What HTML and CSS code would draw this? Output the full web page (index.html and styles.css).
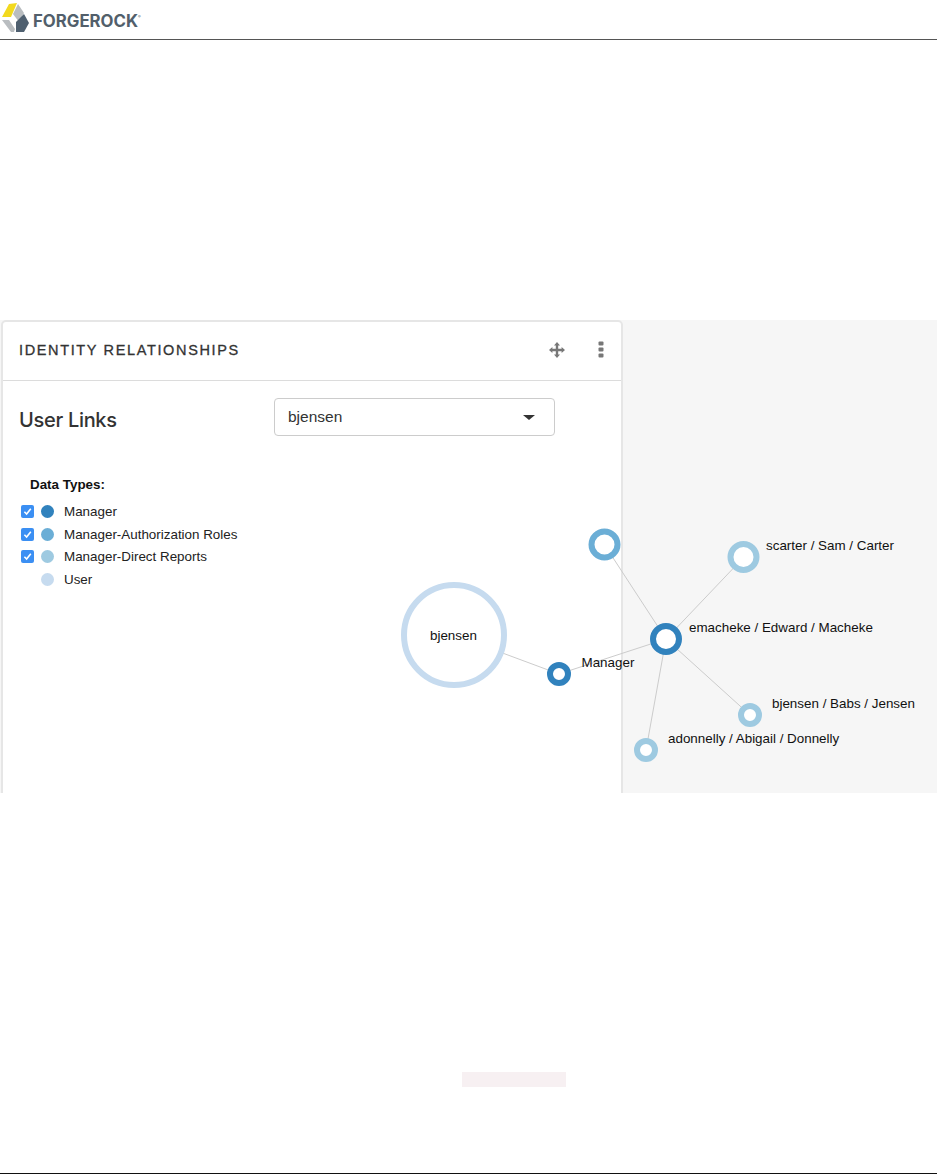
FILE: index.html
```html
<!DOCTYPE html>
<html lang="en">
<head>
<meta charset="utf-8">
<title>ForgeRock Identity Relationships</title>
<link rel="stylesheet" href="styles.css">
</head>
<body>
<div class="page">
  <header class="topbar">
    <svg class="logo-mark" width="30" height="34" viewBox="0 0 30 34" aria-hidden="true">
      <polygon points="2,17 9,4 17,3 11,17" fill="#f2d91f"/>
      <polygon points="18,4 24,13 19,22 13,14" fill="#b9bdc0"/>
      <polygon points="2,20 9,20 15,29 14,32 11,32" fill="#b9bdc0"/>
      <polygon points="24,14 29,23 24,32 16,32 16,22" fill="#4f6070"/>
    </svg>
    <span class="logo-text">FORGEROCK<sup class="logo-reg">®</sup></span>
  </header>

  <figure class="figure">
    <section class="card">
      <div class="card-head">
        <h2 class="card-title">IDENTITY RELATIONSHIPS</h2>
        <div class="card-tools">
          <svg class="icon-move" width="16" height="16" viewBox="0 0 16 16" aria-hidden="true">
            <path d="M8 0 11 3.4H9.2V6.8H12.6V5L16 8 12.6 11V9.2H9.2V12.6H11L8 16 5 12.6H6.8V9.2H3.4V11L0 8 3.4 5V6.8H6.8V3.4H5Z"/>
          </svg>
          <svg class="icon-kebab" width="6" height="17" viewBox="0 0 6 17" aria-hidden="true">
            <rect x="0.5" y="0.5" width="5" height="4" rx="1"/>
            <rect x="0.5" y="6.5" width="5" height="4" rx="1"/>
            <rect x="0.5" y="12.5" width="5" height="4" rx="1"/>
          </svg>
        </div>
      </div>
      <div class="card-body">
        <div class="links-row">
          <h3 class="links-title">User Links</h3>
          <div class="select"><span>bjensen</span><i class="caret"></i></div>
        </div>
        <div class="legend">
          <div class="legend-title">Data Types:</div>
          <div class="legend-row"><span class="check"><svg width="13" height="13" viewBox="0 0 13 13"><path d="M3.4 6.8 5.6 9 9.8 3.8"/></svg></span><i class="dot c1"></i><span>Manager</span></div>
          <div class="legend-row"><span class="check"><svg width="13" height="13" viewBox="0 0 13 13"><path d="M3.4 6.8 5.6 9 9.8 3.8"/></svg></span><i class="dot c2"></i><span>Manager-Authorization Roles</span></div>
          <div class="legend-row"><span class="check"><svg width="13" height="13" viewBox="0 0 13 13"><path d="M3.4 6.8 5.6 9 9.8 3.8"/></svg></span><i class="dot c3"></i><span>Manager-Direct Reports</span></div>
          <div class="legend-row"><span class="check none"></span><i class="dot c4"></i><span>User</span></div>
        </div>
      </div>
    </section>

    <svg class="graph" width="937" height="473" viewBox="0 320 937 473" aria-label="Relationship graph">
      <g class="links">
        <line x1="454" y1="635" x2="559" y2="674"/>
        <line x1="559" y1="674" x2="666" y2="639"/>
        <line x1="666" y1="639" x2="604" y2="544"/>
        <line x1="666" y1="639" x2="744" y2="557"/>
        <line x1="666" y1="639" x2="750" y2="715"/>
        <line x1="666" y1="639" x2="646" y2="750"/>
      </g>
      <circle class="node" cx="454" cy="635" r="50" stroke="#c6dbef" stroke-width="6"/>
      <circle class="node" cx="559" cy="674" r="9" stroke="#3182bd" stroke-width="6"/>
      <circle class="node" cx="666" cy="639" r="13" stroke="#3182bd" stroke-width="6"/>
      <circle class="node" cx="604.5" cy="544.5" r="13" stroke="#6baed6" stroke-width="6"/>
      <circle class="node" cx="743.5" cy="557" r="13" stroke="#9ecae1" stroke-width="6"/>
      <circle class="node" cx="750" cy="715" r="9" stroke="#9ecae1" stroke-width="6"/>
      <circle class="node" cx="646" cy="750" r="9" stroke="#9ecae1" stroke-width="6"/>
      <g class="labels">
        <text x="430" y="640">bjensen</text>
        <text x="581.5" y="667">Manager</text>
        <text x="766" y="550">scarter / Sam / Carter</text>
        <text x="689" y="632">emacheke / Edward / Macheke</text>
        <text x="772" y="708">bjensen / Babs / Jensen</text>
        <text x="668" y="743">adonnelly / Abigail / Donnelly</text>
      </g>
    </svg>
  </figure>

  <div class="mark"></div>
  <div class="footer-rule"></div>
</div>
</body>
</html>
```
FILE: styles.css
```css
* { box-sizing: border-box; }
html, body { margin: 0; padding: 0; background: #fff; }
body { font-family: "Liberation Sans", Arial, sans-serif; color: #222; }
.page { width: 937px; height: 1174px; display: flex; flex-direction: column; overflow: hidden; }

.topbar { height: 40px; flex: none; display: flex; align-items: flex-start; border-bottom: 1px solid #555; }
.logo-mark { display: block; margin-top: 0; flex: none; }
.logo-text { font-family: Inter, sans-serif; font-weight: 700; font-size: 16.8px; line-height: 24px; margin: 9px 0 0 3px; color: #525f6b; letter-spacing: 0; white-space: nowrap; }
.logo-reg { font-size: 4px; font-weight: 400; vertical-align: 9px; line-height: 0; }

.figure { position: relative; margin: 280px 0 0; height: 473px; flex: none; background: #f6f6f6; padding-left: 1px; overflow: hidden; }
.card { width: 622px; height: 480px; background: #fff; border: 2px solid #e6e6e6; border-radius: 5px 5px 0 0; }
.card-head { height: 59px; display: flex; align-items: center; justify-content: space-between; padding: 0 17px 3px 16px; border-bottom: 1px solid #dcdcdc; }
.card-title { margin: 0; font-size: 14.5px; font-weight: 400; letter-spacing: 1.64px; color: #333; -webkit-text-stroke: 0.3px #333; white-space: nowrap; }
.card-tools { display: flex; align-items: center; gap: 33px; }
.icon-move { display: block; fill: #777; }
.icon-kebab { display: block; fill: #777; }

.card-body { padding: 17px 0 0 16px; }
.links-row { display: flex; align-items: center; height: 38px; }
.links-title { margin: 6px 0 0; width: 255px; font-family: Inter, sans-serif; font-weight: 500; font-size: 20px; color: #333; letter-spacing: -0.3px; }
.select { width: 281px; height: 38px; border: 1px solid #ccc; border-radius: 4px; display: flex; align-items: center; justify-content: space-between; padding: 0 19px 0 13px; font-size: 15.5px; color: #333; }
.caret { width: 0; height: 0; border-left: 6px solid transparent; border-right: 6px solid transparent; border-top: 5px solid #333; }

.legend { margin-top: 39px; font-size: 13.4px; color: #222; }
.legend-title { font-weight: 700; margin-left: 11px; line-height: 20px; margin-bottom: 5.4px; color: #111; }
.legend-row { display: flex; align-items: center; height: 22.5px; }
.check { width: 13px; height: 13px; margin-left: 2px; background: #3b8ff3; border-radius: 2px; flex: none; }
.check.none { background: none; }
.check svg { display: block; fill: none; stroke: #fff; stroke-width: 1.6; }
.dot { width: 13px; height: 13px; border-radius: 50%; margin: 0 10px 0 7px; flex: none; }
.c1 { background: #3182bd; }
.c2 { background: #6baed6; }
.c3 { background: #9ecae1; }
.c4 { background: #c6dbef; }

.graph { position: absolute; left: 0; top: 0; display: block; }
.links line { stroke: #ccc; stroke-width: 1; }
.node { fill: #fff; }
.labels text { font-size: 13.4px; fill: #111; }

.mark { width: 104px; height: 15px; margin: 279px 0 0 462px; background: #f7f0f2; flex: none; }
.footer-rule { height: 1px; margin-top: 86px; background: #111; flex: none; }
```
